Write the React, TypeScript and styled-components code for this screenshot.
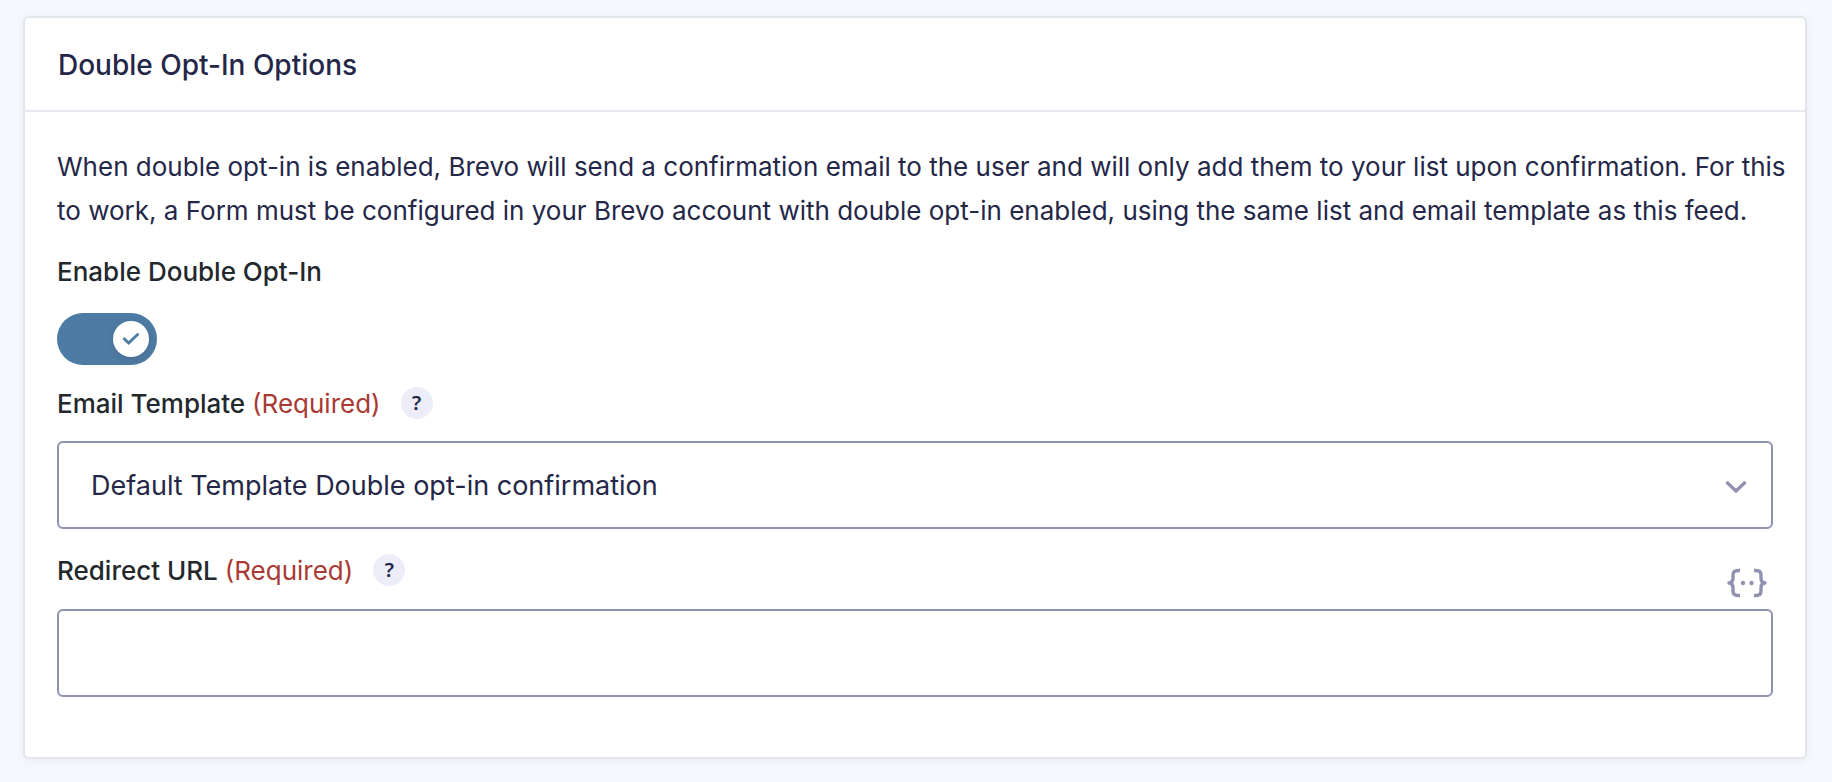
import React, { useState } from "react";
import styled, { createGlobalStyle } from "styled-components";

const color = {
  page: "#f7f8fd",
  card: "#ffffff",
  cardBorder: "#e2e4ee",
  cardTop: "#e1e6eb",
  divider: "#e8e8f0",
  ink: "#242748",
  label: "#23282d",
  required: "#a93a34",
  outline: "#9092b2",
  toggle: "#4e7ba3",
  tip: "#ecedf8",
};

const GlobalStyle = createGlobalStyle`
  *, *::before, *::after { box-sizing: border-box; }
  body {
    margin: 0;
    background: ${color.page};
    color: ${color.ink};
    font-family: Inter, "Liberation Sans", sans-serif;
  }
`;

const Page = styled.main`
  padding: 16px 25px 23px 23px;
`;

const Card = styled.section`
  background: ${color.card};
  border: 2px solid ${color.cardBorder};
  border-top-color: ${color.cardTop};
  border-radius: 6px;
  box-shadow: 0 2px 8px rgba(36, 39, 72, 0.06);
`;

const CardHeader = styled.header`
  padding: 29px 33px 27px;
  border-bottom: 2px solid ${color.divider};
`;

const Title = styled.h2`
  margin: 0;
  font-size: 28px;
  line-height: 36px;
  font-weight: 500;
`;

const CardBody = styled.div`
  display: flex;
  flex-direction: column;
  gap: 22px;
  padding: 33px 32px 60px;
`;

const Description = styled.p`
  margin: 0 -16px 0 0;
  font-size: 26px;
  line-height: 44px;
`;

const Field = styled.div`
  display: flex;
  flex-direction: column;
`;

const FieldHead = styled.div<{ $tall?: boolean }>`
  display: flex;
  justify-content: space-between;
  align-items: flex-start;
  height: ${(p) => (p.$tall ? 58 : 54)}px;
`;

const LabelRow = styled.div<{ $tall?: boolean }>`
  display: flex;
  align-items: center;
  gap: 20px;
  height: ${(p) => (p.$tall ? 38 : 32)}px;
`;

const Label = styled.label`
  padding-top: 2px;
  color: ${color.label};
  font-size: 26px;
  line-height: 32px;
  font-weight: 500;
`;

const Required = styled.span`
  color: ${color.required};
  font-weight: 400;
`;

const TipButton = styled.button`
  display: grid;
  place-items: center;
  width: 32px;
  height: 32px;
  padding: 0;
  border: 0;
  border-radius: 50%;
  background: ${color.tip};
  color: ${color.ink};
  font: 600 20px/32px "Noto Sans", sans-serif;
  cursor: pointer;
`;

const Toggle = styled.span`
  display: grid;
  width: 100px;
  height: 52px;
  margin-top: 4px;
`;

const ToggleInput = styled.input`
  grid-area: 1 / 1;
  appearance: none;
  width: 100px;
  height: 52px;
  margin: 0;
  border-radius: 26px;
  background: ${color.outline};
  cursor: pointer;

  &:checked {
    background: ${color.toggle};
  }
`;

const Knob = styled.span<{ $on: boolean }>`
  grid-area: 1 / 1;
  display: grid;
  place-items: center;
  align-self: center;
  justify-self: ${(p) => (p.$on ? "end" : "start")};
  width: 36px;
  height: 36px;
  margin: 0 8px;
  border-radius: 50%;
  background: ${color.card};
  box-shadow: 0 2px 6px rgba(36, 39, 72, 0.16);
  pointer-events: none;
`;

const SelectBox = styled.div`
  display: grid;
  align-items: center;
`;

const Select = styled.select`
  grid-area: 1 / 1;
  appearance: none;
  width: 100%;
  height: 88px;
  padding: 2px 80px 0 32px;
  border: 2px solid ${color.outline};
  border-radius: 6px;
  background: ${color.card};
  color: ${color.ink};
  font: 400 27px/36px Inter, "Liberation Sans", sans-serif;
`;

const SelectArrow = styled.svg`
  grid-area: 1 / 1;
  justify-self: end;
  margin: 4px 26px 0 0;
  pointer-events: none;
`;

const TextInput = styled.input`
  width: 100%;
  height: 88px;
  padding: 0 32px;
  border: 2px solid ${color.outline};
  border-radius: 6px;
  background: ${color.card};
  color: ${color.ink};
  font: 400 27px/36px Inter, "Liberation Sans", sans-serif;
`;

const MergeTagButton = styled.button`
  display: grid;
  place-items: center;
  align-self: flex-end;
  height: 52px;
  padding: 0 6px;
  border: 0;
  background: none;
  cursor: pointer;
`;

const CheckIcon = () => (
  <svg width="18" height="14" viewBox="0 0 18 14" fill="none" aria-hidden="true">
    <path d="M2.2 6.8 6.6 11 15.6 2.4" stroke={color.toggle} strokeWidth="2.8" strokeLinecap="round" />
  </svg>
);

const BracesIcon = () => (
  <svg width="40" height="30" viewBox="0 0 40 30" fill="none" aria-hidden="true">
    <g stroke={color.outline} strokeWidth="3.4" strokeLinejoin="round">
      <path d="M13 2.500H11Q6 2.500 6 7V10.500Q6 14.500 2 15Q6 15.500 6 19.500V23Q6 27.500 11 27.500H13" />
      <path d="M27 2.500H29Q34 2.500 34 7V10.500Q34 14.500 38 15Q34 15.500 34 19.500V23Q34 27.500 29 27.500H27" />
    </g>
    <circle cx="16" cy="15" r="2.200" fill={color.outline} />
    <circle cx="24.500" cy="15" r="2.200" fill={color.outline} />
  </svg>
);

export default function App() {
  const [enabled, setEnabled] = useState(true);
  const [url, setUrl] = useState("");

  return (
    <>
      <GlobalStyle />
      <Page>
        <Card>
          <CardHeader>
            <Title>Double Opt-In Options</Title>
          </CardHeader>
          <CardBody>
            <Description>
              When double opt-in is enabled, Brevo will send a confirmation email to the user and will only add them to
              your list upon confirmation. For this to work, a Form must be configured in your Brevo account with double
              opt-in enabled, using the same list and email template as this feed.
            </Description>

            <Field>
              <FieldHead>
                <LabelRow>
                  <Label htmlFor="double-opt-in">Enable Double Opt-In</Label>
                </LabelRow>
              </FieldHead>
              <Toggle>
                <ToggleInput
                  id="double-opt-in"
                  type="checkbox"
                  checked={enabled}
                  onChange={(e) => setEnabled(e.target.checked)}
                />
                <Knob $on={enabled}>{enabled && <CheckIcon />}</Knob>
              </Toggle>
            </Field>

            <Field>
              <FieldHead>
                <LabelRow>
                  <Label htmlFor="email-template">
                    Email Template <Required>(Required)</Required>
                  </Label>
                  <TipButton type="button" aria-label="About the email template">?</TipButton>
                </LabelRow>
              </FieldHead>
              <SelectBox>
                <Select id="email-template" defaultValue="default">
                  <option value="default">Default Template Double opt-in confirmation</option>
                </Select>
                <SelectArrow width="22" height="14" viewBox="0 0 22 14" fill="none" aria-hidden="true">
                  <path d="M1.500 2 11 11 20.500 2" stroke={color.outline} strokeWidth="3.400" />
                </SelectArrow>
              </SelectBox>
            </Field>

            <Field>
              <FieldHead $tall>
                <LabelRow $tall>
                  <Label htmlFor="redirect-url">
                    Redirect URL <Required>(Required)</Required>
                  </Label>
                  <TipButton type="button" aria-label="About the redirect URL">?</TipButton>
                </LabelRow>
                <MergeTagButton type="button" aria-label="Insert merge tag">
                  <BracesIcon />
                </MergeTagButton>
              </FieldHead>
              <TextInput id="redirect-url" type="text" value={url} onChange={(e) => setUrl(e.target.value)} />
            </Field>
          </CardBody>
        </Card>
      </Page>
    </>
  );
}
